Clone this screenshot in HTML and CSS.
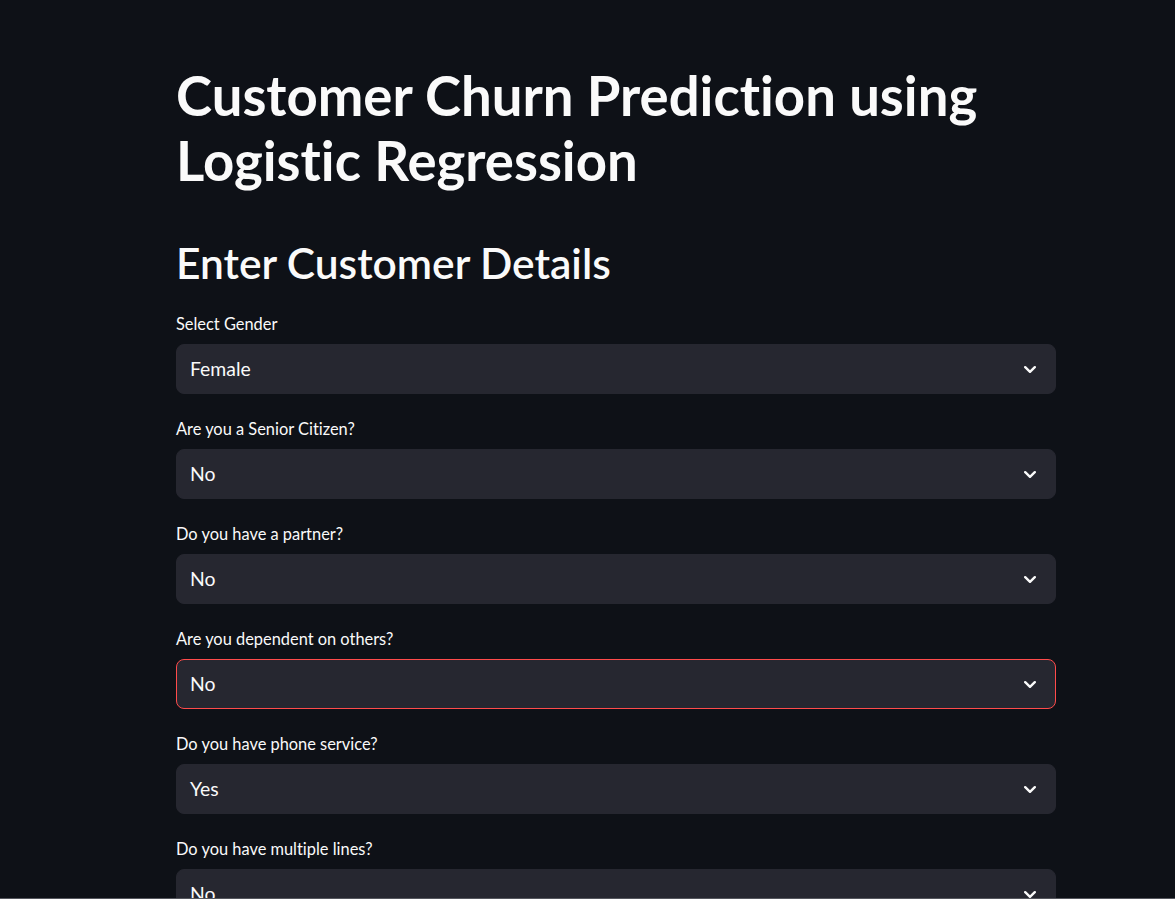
FILE: index.html
```html
<!DOCTYPE html>
<html lang="en">
<head>
<meta charset="utf-8">
<title>Customer Churn Prediction</title>
<link rel="stylesheet" href="styles.css">
</head>
<body>
<main class="app">
  <h1 class="title">Customer Churn Prediction using Logistic Regression</h1>
  <h2 class="subtitle">Enter Customer Details</h2>
  <form class="fields">
    <div class="field">
      <label class="label">Select Gender</label>
      <div class="select"><span class="value">Female</span><svg class="chev" width="12" height="7" viewBox="0 0 12 7"><polyline points="1.2,1.2 6,5.8 10.8,1.2" fill="none" stroke="#fafafa" stroke-width="2.4" stroke-linecap="round" stroke-linejoin="round"/></svg></div>
    </div>
    <div class="field">
      <label class="label">Are you a Senior Citizen?</label>
      <div class="select"><span class="value">No</span><svg class="chev" width="12" height="7" viewBox="0 0 12 7"><polyline points="1.2,1.2 6,5.8 10.8,1.2" fill="none" stroke="#fafafa" stroke-width="2.4" stroke-linecap="round" stroke-linejoin="round"/></svg></div>
    </div>
    <div class="field">
      <label class="label">Do you have a partner?</label>
      <div class="select"><span class="value">No</span><svg class="chev" width="12" height="7" viewBox="0 0 12 7"><polyline points="1.2,1.2 6,5.8 10.8,1.2" fill="none" stroke="#fafafa" stroke-width="2.4" stroke-linecap="round" stroke-linejoin="round"/></svg></div>
    </div>
    <div class="field">
      <label class="label">Are you dependent on others?</label>
      <div class="select focused"><span class="value">No</span><svg class="chev" width="12" height="7" viewBox="0 0 12 7"><polyline points="1.2,1.2 6,5.8 10.8,1.2" fill="none" stroke="#fafafa" stroke-width="2.4" stroke-linecap="round" stroke-linejoin="round"/></svg></div>
    </div>
    <div class="field">
      <label class="label">Do you have phone service?</label>
      <div class="select"><span class="value">Yes</span><svg class="chev" width="12" height="7" viewBox="0 0 12 7"><polyline points="1.2,1.2 6,5.8 10.8,1.2" fill="none" stroke="#fafafa" stroke-width="2.4" stroke-linecap="round" stroke-linejoin="round"/></svg></div>
    </div>
    <div class="field">
      <label class="label">Do you have multiple lines?</label>
      <div class="select"><span class="value">No</span><svg class="chev" width="12" height="7" viewBox="0 0 12 7"><polyline points="1.2,1.2 6,5.8 10.8,1.2" fill="none" stroke="#fafafa" stroke-width="2.4" stroke-linecap="round" stroke-linejoin="round"/></svg></div>
    </div>
  </form>
</main>
<div class="frame-edge"></div>
</body>
</html>
```
FILE: styles.css
```css
html {
  scrollbar-width: none;
  background: #0e1117;
}
html::-webkit-scrollbar { display: none; }
body {
  margin: 0;
  background: #0e1117;
  color: #fafafa;
  font-family: Lato, "Noto Sans", "DejaVu Sans", sans-serif;
  font-variant-ligatures: no-common-ligatures;
}
.app {
  width: 880px;
  margin-left: 176px;
  padding-top: 63px;
  display: flex;
  flex-direction: column;
}
.title {
  margin: 0;
  font-size: 54.5px;
  line-height: 65px;
  font-weight: 700;
  width: 860px;
}
.subtitle {
  margin: 45px 0 0 0;
  font-size: 42.5px;
  line-height: 50px;
  font-weight: 600;
}
.fields {
  margin-top: 24px;
  display: flex;
  flex-direction: column;
  gap: 23px;
}
.field {
  display: flex;
  flex-direction: column;
  gap: 8px;
}
.label {
  font-size: 16.4px;
  line-height: 24px;
  height: 24px;
}
.select {
  height: 50px;
  box-sizing: border-box;
  background: #262730;
  border: 1px solid #262730;
  border-radius: 8px;
  display: flex;
  align-items: center;
  justify-content: space-between;
  padding: 0 19px 0 13px;
}
.select.focused {
  border-color: #ff4b4b;
}
.value {
  font-size: 19.4px;
  line-height: 48px;
}
.chev { display: block; }
.frame-edge {
  position: fixed;
  left: 0;
  right: 0;
  bottom: 0;
  height: 1px;
  background: #55575e;
}
```
